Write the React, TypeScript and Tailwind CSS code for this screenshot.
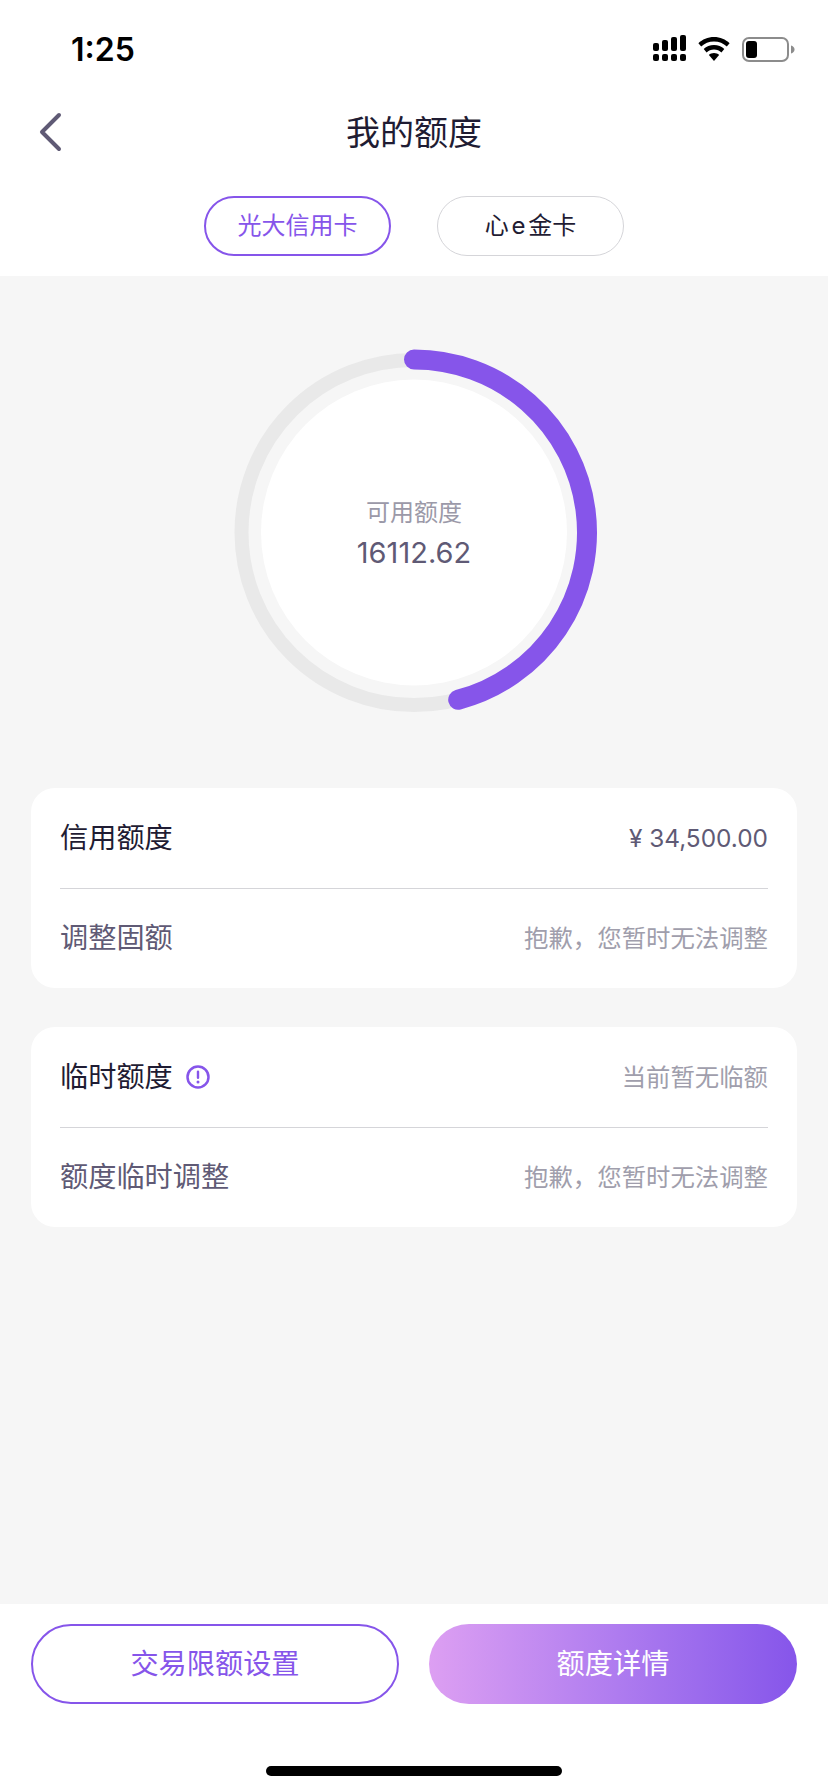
const PURPLE = "#8655ea";

function polar(r: number, deg: number, c = 184, cy = 183.5) {
  const a = (deg * Math.PI) / 180;
  return { x: c + r * Math.sin(a), y: cy - r * Math.cos(a) };
}

function StatusIcons() {
  return (
    <div className="flex items-start">
      <svg width="34" height="26" viewBox="0 0 34 26" fill="#000">
        <rect x="0" y="8" width="6" height="8" rx="2" />
        <rect x="9" y="5" width="6" height="11" rx="2" />
        <rect x="18" y="2" width="6" height="14" rx="2" />
        <rect x="27" y="0" width="6" height="16" rx="2" />
        <rect x="0" y="19" width="6" height="7" rx="2" />
        <rect x="9" y="19" width="6" height="7" rx="2" />
        <rect x="18" y="19" width="6" height="7" rx="2" />
        <rect x="27" y="19" width="6" height="7" rx="2" />
      </svg>
      <svg className="ml-[11px] mt-[2px]" width="32" height="24" viewBox="0 0 32 24" fill="#000">
        <path d="M16 0C9.8 0 4.4 2.4 0.4 6.2L3.2 9.6C6.5 6.5 11 4.6 16 4.6s9.5 1.9 12.8 5l2.8-3.4C27.6 2.4 22.2 0 16 0z" />
        <path d="M16 8C12 8 8.400 9.500 5.700 12L8.600 15.400C10.500 13.700 13.100 12.600 16 12.600s5.500 1.100 7.400 2.800l2.900-3.400C23.600 9.500 20 8 16 8z" />
        <path d="M16 16c-2 0-3.800.7-5.100 1.900L16 24l5.100-6.100C19.800 16.700 18 16 16 16z" />
      </svg>
      <svg className="ml-[12px] mt-[2px]" width="53" height="25" viewBox="0 0 53 25">
        <rect x="1" y="1" width="45" height="23" rx="6" fill="none" stroke="#8c8c8c" strokeWidth="2" />
        <rect x="4" y="4" width="11" height="17" rx="3" fill="#000" />
        <path d="M49 8.500c2 .5 3.500 2 3.500 4s-1.500 3.500-3.500 4z" fill="#8c8c8c" />
      </svg>
    </div>
  );
}

function Ring() {
  const start = polar(173, 0);
  const end = polar(173, 165.2);
  return (
    <div className="relative w-[368px] h-[368px] mx-auto flex flex-col items-center justify-center">
      <svg className="absolute inset-0" width="368" height="368" viewBox="0 0 368 368">
        <circle cx="184" cy="183.5" r="172.5" fill="none" stroke="#e9e9e9" strokeWidth="14" />
        <circle cx="184" cy="183.5" r="153" fill="#fff" />
        <path
          d={`M${start.x} ${start.y} A173 173 0 0 1 ${end.x} ${end.y}`}
          fill="none"
          stroke={PURPLE}
          strokeWidth="20"
          strokeLinecap="round"
        />
      </svg>
      <div className="relative text-[24px] leading-[34px] text-[#9b99a8] mb-[5px]">可用额度</div>
      <div className="relative text-[29px] leading-[36px] text-[#5f5a75]">16112.62</div>
    </div>
  );
}

function Row({ label, value, dark, muted = true, info }: { label: string; value: string; dark?: boolean; muted?: boolean; info?: boolean }) {
  return (
    <div className="h-[100px] last:h-[99px] flex items-center justify-between">
      <div className="flex items-center">
        <span className={`text-[28.2px] ${dark ? "text-[#1f1c33]" : "text-[#5f5a75]"}`}>{label}</span>
        {info && (
          <svg className="ml-[13px]" width="24" height="24" viewBox="0 0 24 24" fill="none">
            <circle cx="12" cy="12" r="10.500" stroke={PURPLE} strokeWidth="2.500" />
            <rect x="10.800" y="5.500" width="2.400" height="8.500" rx="1.200" fill={PURPLE} />
            <circle cx="12" cy="17" r="1.500" fill={PURPLE} />
          </svg>
        )}
      </div>
      <span className={`text-[24.4px] ${muted ? "text-[#a09eac]" : "text-[#5f5a75]"}`}>{value}</span>
    </div>
  );
}

export default function App() {
  return (
    <div className="w-[828px] h-[1792px] flex flex-col bg-white overflow-hidden font-['Inter','Noto_Sans_CJK_SC',sans-serif]">
      {/* Status bar */}
      <div className="h-[88px] flex justify-between pl-[71px] pr-[33px] pt-[35px]">
        <span className="text-[32px] leading-[30px] font-semibold text-black">1:25</span>
        <StatusIcons />
      </div>

      {/* Nav */}
      <div className="relative h-[88px] flex items-center justify-center">
        <svg className="absolute left-[38px] top-[24px]" width="24" height="40" viewBox="0 0 24 40" fill="none">
          <path d="M21 3 4 20l17 17" stroke="#5f5a75" strokeWidth="4" strokeLinecap="round" strokeLinejoin="round" />
        </svg>
        <h1 className="text-[34px] font-normal text-[#1f1c33]">我的额度</h1>
      </div>

      {/* Tabs */}
      <div className="h-[100px] pt-5 flex justify-center gap-[46px]">
        <div className="w-[187px] h-[60px] rounded-full border-2 border-[#8655ea] flex items-center justify-center text-[24px] text-[#8655ea]">
          光大信用卡
        </div>
        <div className="w-[187px] h-[60px] rounded-full border border-[#d5d5d9] flex items-center justify-center text-[24px] text-[#1f1c33] [word-spacing:-4px]">
          心 e 金卡
        </div>
      </div>

      <main className="flex-1 bg-[#f6f6f6] px-[31px] pt-[73px]">
        <Ring />
        <div className="mt-[71px] bg-white rounded-[24px] px-[29px]">
          <Row label="信用额度" value="¥ 34,500.00" dark muted={false} />
          <div className="h-px bg-[#d5d5d9]" />
          <Row label="调整固额" value="抱歉，您暂时无法调整" />
        </div>
        <div className="mt-[39px] bg-white rounded-[24px] px-[29px]">
          <Row label="临时额度" value="当前暂无临额" dark info />
          <div className="h-px bg-[#d5d5d9]" />
          <Row label="额度临时调整" value="抱歉，您暂时无法调整" />
        </div>
      </main>

      {/* Bottom actions */}
      <div className="h-[188px] pt-5 px-[31px] relative">
        <div className="flex justify-between">
          <button className="w-[368px] h-[80px] rounded-full border-2 border-[#8655ea] text-[28.2px] text-[#8655ea]">
            交易限额设置
          </button>
          <button className="w-[368px] h-[80px] rounded-full bg-gradient-to-r from-[#dd9ff2] to-[#8655ea] text-[28.2px] text-white">
            额度详情
          </button>
        </div>
        <div className="absolute left-[266px] bottom-[16px] w-[296px] h-[10px] rounded-full bg-black" />
      </div>
    </div>
  );
}
